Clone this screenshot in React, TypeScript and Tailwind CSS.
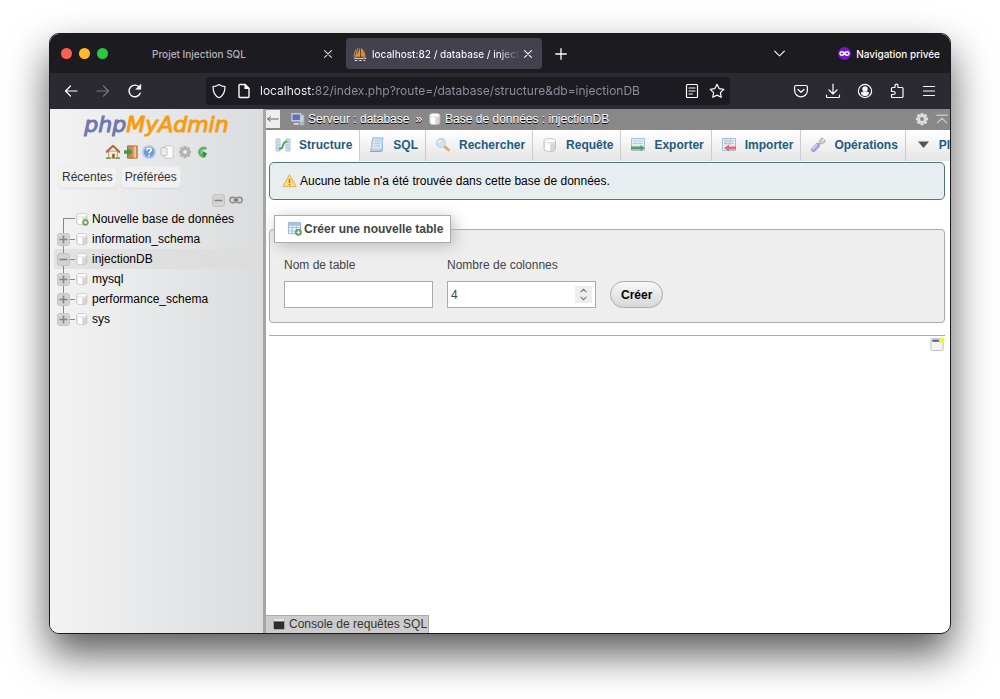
import React from "react";
import type { ReactNode } from "react";

type IconProps = { children: ReactNode; className?: string };

// thin line icons of the browser chrome, 16px grid
function Line({ children, className = "size-4" }: IconProps) {
  return (
    <svg
      viewBox="0 0 16 16"
      className={`${className} shrink-0`}
      fill="none"
      stroke="currentColor"
      strokeWidth="1.2"
      strokeLinecap="round"
      strokeLinejoin="round"
      aria-hidden="true"
    >
      {children}
    </svg>
  );
}

// coloured pixel icons of the phpMyAdmin theme
function Pic({ children, className = "size-4" }: IconProps) {
  return (
    <svg viewBox="0 0 16 16" className={`${className} shrink-0`} fill="none" aria-hidden="true">
      {children}
    </svg>
  );
}

function DbIcon({ className, add }: { className?: string; add?: boolean }) {
  return (
    <Pic className={className}>
      <path d="M2 3.500C2 1 13.500 1 13.500 3.500v9c0 2.500-11.500 2.500-11.500 0z" fill="#e2e2e2" stroke="#c2c2c2" />
      <path d="M3 5.500c2 1 4 1.200 5 1.200V14c-2 0-4-.3-5-1.200z" fill="#fff" />
      <path d="M10 7v6.500M12 6.500V13" stroke="#cacaca" />
      <ellipse cx="7.750" cy="3.600" rx="5.300" ry="1.500" fill="#fafafa" />
      {add && (
        <>
          <circle cx="12" cy="12" r="3.600" fill="#6f9f5b" />
          <circle cx="12" cy="12" r="1.600" fill="#f1f7ee" />
        </>
      )}
    </Pic>
  );
}

const tabIcons: Record<string, ReactNode> = {
  Structure: (
    <>
      <path d="M1 2h4v12H1zM11 2h4v12h-4z" fill="#d7e6f2" stroke="#a9c2d6" />
      <path d="M2 5h2M2 8h2M2 11h2M12 5h2M12 8h2M12 11h2" stroke="#8fb2cf" />
      <path d="M4 12l3-1 2-5 3-2" stroke="#4ea657" strokeWidth="2" />
    </>
  ),
  SQL: (
    <>
      <path d="M4 1h10c-2 3 .5 8-1 12H1.500C4 10 2 5 4 1z" fill="#d3e3f3" stroke="#94b0cc" />
      <path d="M5.500 4h6M5.500 6.500h6M5.500 9H11" stroke="#b3cae0" />
      <path d="M1 14.500h11l2-1.500" stroke="#86a4c4" />
    </>
  ),
  Rechercher: (
    <>
      <path d="M9 9l4.500 4" stroke="#deaa7c" strokeWidth="3" strokeLinecap="round" />
      <circle cx="6" cy="6" r="4.400" fill="#cfe3f5" stroke="#c3d0dd" strokeWidth="1.200" />
      <path d="M3.500 6c0-2 1.500-2.500 2.500-2.500" stroke="#fff" />
    </>
  ),
  Exporter: (
    <>
      <path d="M1.500 1.500h13v12h-13z" fill="#e4edf5" stroke="#a9bfd2" />
      <path d="M3 4h10M3 6.500h10" stroke="#b3c9dc" />
      <path d="M1 11h10" stroke="#55a05a" strokeWidth="3" />
      <path d="M10.500 8l4.500 3-4.500 3z" fill="#55a05a" />
    </>
  ),
  Importer: (
    <>
      <path d="M1.500 1.500h13v12h-13z" fill="#e4edf5" stroke="#a9bfd2" />
      <path d="M3 4h10M3 6.500h10M5 2v6M9 2v6" stroke="#b3c0e0" />
      <path d="M7 11h8" stroke="#e06a7b" strokeWidth="3" />
      <path d="M8 7.500L3 11l5 3.500z" fill="#e06a7b" />
    </>
  ),
  "Opérations": (
    <>
      <path d="M8.500 7.500l3-3" stroke="#b8b8c0" strokeWidth="2.500" />
      <path d="M10 2.500c1-1.500 2.500-1.500 3.500-1.200l-2 2 1.500 1.500 2-2c.5 2-.5 3.700-2.500 4-2 .2-3.500-2-2.500-4.300z" fill="#d3d3d8" stroke="#a6a6ae" strokeWidth=".8" />
      <path d="M3.500 12.500l4-4" stroke="#9fa3df" strokeWidth="5" strokeLinecap="round" />
      <path d="M3 11.500l3.500-3.500" stroke="#ccd0f7" strokeWidth="1.800" strokeLinecap="round" />
    </>
  ),
};

const tabs = ["Structure", "SQL", "Rechercher", "Requête", "Exporter", "Importer", "Opérations"];

const databases = ["information_schema", "injectionDB", "mysql", "performance_schema", "sys"];

const gearTeeth = [0, 45, 90, 135, 180, 225, 270, 315];

function Gear({ className, fill, hole }: { className: string; fill: string; hole: string }) {
  return (
    <Pic className={className}>
      {gearTeeth.map((a) => (
        <path key={a} d="M6.500 1h3l.5 3H6z" fill={fill} transform={`rotate(${a} 8 8)`} />
      ))}
      <circle cx="8" cy="8" r="5" fill={fill} />
      <circle cx="8" cy="8" r="2.200" fill={hole} />
    </Pic>
  );
}

function IconButton({ label, children, className = "" }: { label: string; children: ReactNode; className?: string }) {
  return (
    <button type="button" aria-label={label} className={`flex shrink-0 items-center justify-center ${className}`}>
      {children}
    </button>
  );
}

function TitleBar() {
  return (
    <div className="flex h-[39px] shrink-0 items-center bg-[#1c1b20] pl-[11px] pr-[10px] font-[Inter,sans-serif] text-[10px] text-[#fbfbfe]">
      <div className="flex gap-[7px]">
        <span className="size-[11px] rounded-full bg-[#fe5f57]" />
        <span className="size-[11px] rounded-full bg-[#febb2e]" />
        <span className="size-[11px] rounded-full bg-[#28c840]" />
      </div>

      <div className="ml-[34px] mr-1 flex h-[31px] w-[200px] items-center justify-between pl-[10px] pr-[9px] font-medium text-[#b5b4bc]">
        <span className="whitespace-nowrap">Projet Injection SQL</span>
        <IconButton label="Fermer l'onglet">
          <Line className="size-[10px]">
            <path d="M2.500 2.500l11 11M13.500 2.500l-11 11" stroke="#dddce2" strokeWidth="1.700" />
          </Line>
        </IconButton>
      </div>
      <div className="flex h-[31px] w-[196px] items-center rounded bg-[#42414d] pl-[7px] pr-[9px] font-medium">
        <Pic className="size-[14px]">
          <path d="M8 0v11H2C5 8 7 5 8 0z" fill="#f29111" />
          <path d="M9 1c3 2 5 6 5.500 10H9z" fill="#e8862a" />
          <path d="M3 3L1 11M5.500 1L3 11" stroke="#d9a05b" />
          <path d="M1 13c2-1.500 3 1 5 0s3 1 5 0 3 0 4 0M2 15.500h3M7 15.500h3M12 15.500h2" stroke="#e6e6ea" strokeWidth="1.200" />
        </Pic>
        <span className="ml-[5px] min-w-0 flex-1 overflow-hidden whitespace-nowrap bg-[linear-gradient(90deg,#fbfbfe_85%,transparent)] bg-clip-text text-transparent">
          localhost:82 / database / injectionDB
        </span>
        <IconButton label="Fermer l'onglet" className="ml-[3px]">
          <Line className="size-[10px]">
            <path d="M2.500 2.500l11 11M13.500 2.500l-11 11" strokeWidth="1.700" />
          </Line>
        </IconButton>
      </div>
      <IconButton label="Nouvel onglet" className="ml-3">
        <Line className="size-[14px]">
          <path d="M8 2v12M2 8h12" strokeWidth="1.500" />
        </Line>
      </IconButton>

      <IconButton label="Lister tous les onglets" className="ml-auto mr-[52px]">
        <Line className="size-[13px]">
          <path d="M2 5l6 6 6-6" strokeWidth="1.400" />
        </Line>
      </IconButton>
      <Pic className="size-[13px]">
        <circle cx="8" cy="8" r="8" fill="#7a14d2" />
        <path d="M8 8C6.500 5.500 2.500 5 2.500 8s4 2.500 5.500 0c1.500-2.500 5.500-3 5.500 0s-4 2.500-5.500 0z" stroke="#fff" strokeWidth="1.800" />
      </Pic>
      <span className="ml-[5px] font-medium">Navigation privée</span>
    </div>
  );
}

function ToolBar() {
  return (
    <div className="flex h-9 shrink-0 items-center bg-[#2b2a33] px-[13px] text-[#fbfbfe]">
      <div className="flex gap-4">
        <IconButton label="Précédent">
          <Line>
            <path d="M14 8H2.500M7.500 3L2.500 8l5 5" />
          </Line>
        </IconButton>
        <IconButton label="Suivant" className="text-[#77767f]">
          <Line>
            <path d="M2 8h11.500M8.500 3l5 5-5 5" />
          </Line>
        </IconButton>
        <IconButton label="Actualiser">
          <Line>
            <path d="M13.200 10.200A5.800 5.800 0 1 1 12.500 4.500" strokeWidth="1.400" />
            <path d="M13.800 1.500v4.800H9z" fill="currentColor" strokeWidth=".6" />
          </Line>
        </IconButton>
      </div>

      <div className="mx-[63px] flex h-7 min-w-0 flex-1 items-center rounded bg-[#1c1b22] pl-[5px] pr-[5px]">
        <Line>
          <path d="M8 1.500c2 1.500 4 2 6 2.200 0 5-1.500 9-6 11-4.500-2-6-6-6-11 2-.2 4-.7 6-2.200z" />
        </Line>
        <Line className="ml-[9px] size-4">
          <path d="M3 2.500c0-.6.400-1 1-1h5l4 4v8c0 .6-.4 1-1 1H4c-.6 0-1-.4-1-1z" strokeWidth="1.400" />
          <path d="M9 1.500v4h4z" fill="currentColor" />
        </Line>
        <input
          type="text"
          aria-label="Adresse"
          readOnly
          value="localhost:82/index.php?route=/database/structure&db=injectionDB"
          className="ml-2 min-w-0 flex-1 bg-[linear-gradient(90deg,#fbfbfe_54px,#9190a0_54px)] bg-clip-text font-[Inter,sans-serif] text-[12px] text-transparent outline-none"
        />
        <IconButton label="Mode lecture">
          <Line>
            <path d="M3.500 1.500h9c.6 0 1 .4 1 1v11c0 .6-.4 1-1 1h-9c-.6 0-1-.4-1-1v-11c0-.6.400-1 1-1zM5 5h6M5 8h6M5 11h3.500" />
          </Line>
        </IconButton>
        <IconButton label="Marque-page" className="ml-[9px]">
          <Line>
            <path d="M8 1.300l2.100 4.300 4.700.7-3.400 3.300.8 4.700L8 12.100l-4.200 2.200.8-4.700L1.200 6.300l4.700-.7z" />
          </Line>
        </IconButton>
      </div>

      <div className="flex gap-4">
        <IconButton label="Pocket">
          <Line>
            <path d="M3 2.500h10c.8 0 1.400.6 1.400 1.400V7.500c0 3.500-2.900 6.300-6.400 6.300S1.600 11 1.600 7.500V3.900c0-.8.600-1.400 1.400-1.400zM5 6.500l3 2.800 3-2.800" />
          </Line>
        </IconButton>
        <IconButton label="Téléchargements">
          <Line>
            <path d="M8 1v9.500M4 7l4 4 4-4M1.500 12v1.500c0 .6.400 1 1 1h11c.6 0 1-.4 1-1V12" />
          </Line>
        </IconButton>
        <IconButton label="Compte">
          <Line>
            <circle cx="8" cy="8" r="6.600" />
            <circle cx="8" cy="6" r="2.100" fill="currentColor" />
            <path d="M4.500 10.500c0-1 1-1.300 2-1.300h3c1 0 2 .3 2 1.300-.8 1.500-2 2-3.500 2s-2.700-.5-3.500-2z" fill="currentColor" />
          </Line>
        </IconButton>
        <IconButton label="Extensions">
          <Line>
            <path d="M6 4.500V3c0-1 .6-1.800 1.500-1.800S9 2 9 3v1.500h4c.6 0 1 .4 1 1v8c0 .6-.4 1-1 1H3.500c-.6 0-1-.4-1-1v-2H4.500c1 0 1.700-.7 1.700-1.500S5.500 8.500 4.500 8.500h-2v-3c0-.6.400-1 1-1z" />
          </Line>
        </IconButton>
        <IconButton label="Menu">
          <Line>
            <path d="M2.500 3.500h11M2.500 8h11M2.500 12.500h11" />
          </Line>
        </IconButton>
      </div>
    </div>
  );
}

function Toggle({ open }: { open?: boolean }) {
  return (
    <Pic className="size-[13px]">
      <rect x=".6" y=".6" width="14.800" height="14.800" rx="3" fill="#d3d3d3" stroke="#bdbdbd" />
      <path d={open ? "M3 8h10" : "M3 8h10M8 3v10"} stroke="#858585" strokeWidth="2" />
    </Pic>
  );
}

function Sidebar() {
  return (
    <aside className="w-[216px] shrink-0 border-r-[3px] border-[#a2a6a8] bg-linear-to-r from-[#f3f3f3] to-[#dadcde]">
      <a href="#" className="mt-[2px] block text-center font-['DejaVu_Sans',sans-serif] text-[22px] leading-7 italic">
        <span className="text-[#6c78af] [-webkit-text-stroke:1px_#6c78af]">php</span>
        <span className="text-[#f89c0e] [-webkit-text-stroke:1px_#f89c0e]">MyAdmin</span>
      </a>

      <div className="mt-[6px] flex justify-center gap-1 pl-[2px]">
        <a href="#" aria-label="Accueil">
          <Pic className="size-[14px]">
            <path d="M3 7h10v8H3z" fill="#f3ead8" stroke="#a3907a" />
            <path d="M0 8.500L8 1l8 7.500" stroke="#b5622d" strokeWidth="2.200" />
            <path d="M7 10h3v5H7z" fill="#97623a" />
            <path d="M0 15h5M11 15h5" stroke="#6fa653" strokeWidth="2" />
          </Pic>
        </a>
        <a href="#" aria-label="Déconnexion">
          <Pic className="size-[14px]">
            <path d="M4 1h11v14H4z" fill="#d58c4e" stroke="#9b6337" />
            <path d="M11 2l3-1v14l-3-1z" fill="#f1c58f" />
            <path d="M0 6h5V3l5 5-5 5v-3H0z" fill="#459b4a" />
          </Pic>
        </a>
        <a href="#" aria-label="Documentation de phpMyAdmin">
          <Pic className="size-[14px]">
            <circle cx="8" cy="8" r="7" fill="#6d9edb" stroke="#b9cbe4" strokeWidth="2" />
            <path d="M5.500 6c0-3 5-3 5-.3C10.500 7.500 8 7.500 8 9.500M8 11v2" stroke="#fff" strokeWidth="1.800" />
          </Pic>
        </a>
        <a href="#" aria-label="Documentation de MySQL">
          <Pic className="size-[14px]">
            <path d="M5 1h8l2 2v12H5z" fill="#fcfcfc" stroke="#c3c3c3" />
            <path d="M1 4c0-1.500 7-1.500 7 0v7c0 1.500-7 1.500-7 0z" fill="#ececec" stroke="#bcbcbc" />
          </Pic>
        </a>
        <a href="#" aria-label="Paramètres du panneau">
          <Gear className="size-[14px]" fill="#b2b2b2" hole="#ededed" />
        </a>
        <a href="#" aria-label="Recharger">
          <Pic className="size-[14px]">
            <path d="M11.500 4.500A4.500 4.500 0 1 0 11 12" stroke="#5fb266" strokeWidth="3.500" />
            <path d="M7 6.500l6 3.500-5 4z" fill="#348a3d" />
          </Pic>
        </a>
      </div>

      <div className="mt-[7px] flex gap-1 pl-2">
        <button type="button" className="h-[22px] rounded-sm border border-[#ebebeb] bg-[#f1f1f1] px-[3px] text-[#333] shadow-xs">
          Récentes
        </button>
        <button type="button" className="h-[22px] rounded-sm border border-[#ebebeb] bg-[#f1f1f1] px-[3px] text-[#333] shadow-xs">
          Préférées
        </button>
      </div>

      <div className="mt-1 flex h-4 items-center justify-end gap-1 pr-[20px]">
        <IconButton label="Tout réduire">
          <Toggle open />
        </IconButton>
        <IconButton label="Délier du panneau principal">
          <Pic className="size-[14px]">
            <rect x="1" y="5" width="7" height="6" rx="3" stroke="#909090" strokeWidth="1.800" />
            <rect x="8" y="5" width="7" height="6" rx="3" stroke="#909090" strokeWidth="1.800" />
            <path d="M5 8h6" stroke="#777" strokeWidth="1.500" />
          </Pic>
        </IconButton>
      </div>

      <ul className="mt-px pl-1 text-black">
        <li className="flex h-5 items-center pl-[9px]">
          <span className="mt-[9px] h-[11px] w-3 border-l border-t border-[#888]" />
          <DbIcon className="size-[14px]" add />
          <a href="#" className="ml-[3px] whitespace-nowrap">
            Nouvelle base de données
          </a>
        </li>
        {databases.map((name) => {
          const current = name === "injectionDB";
          return (
            <li key={name} className={`flex h-5 items-center pl-[3px] ${current ? "bg-[#dcdcdc]/70" : ""}`}>
              <span className="flex h-5 w-[13px] flex-col items-center">
                <span className="w-px flex-1 bg-[#888]" />
                <IconButton label={current ? "Réduire" : "Développer"}>
                  <Toggle open={current} />
                </IconButton>
                <span className={`w-px flex-1 ${name === "sys" ? "" : "bg-[#888]"}`} />
              </span>
              <span className="h-px w-[5px] bg-[#888]" />
              <DbIcon className="size-[14px]" />
              <a href="#" className="ml-[3px]">
                {name}
              </a>
            </li>
          );
        })}
      </ul>
    </aside>
  );
}

function Breadcrumb() {
  return (
    <nav className="flex h-[21px] shrink-0 items-center bg-[#888] pr-[2px] pb-px text-white [text-shadow:0_1px_0_#000]">
      <IconButton label="Masquer le panneau" className="h-[18px] w-[14px] bg-[#eee]">
        <Line className="size-3 text-[#555]">
          <path d="M15 8H1M4.500 5L1 8l3.500 3" />
        </Line>
      </IconButton>
      <a href="#" className="ml-[11px] flex items-center gap-[3px]">
        <Pic className="size-[14px]">
          <path d="M11 3h4v12h-5z" fill="#c9d5dd" stroke="#8796a1" />
          <path d="M1 2h10v8H1z" fill="#5b72c6" stroke="#c3cbdd" strokeWidth="1.500" />
          <path d="M12 12h2" stroke="#69c26c" strokeWidth="2" />
          <path d="M3 13.500h6" stroke="#d6d9e0" strokeWidth="2" />
        </Pic>
        Serveur : database
      </a>
      <span className="mx-[6px]">»</span>
      <a href="#" className="flex items-center gap-[3px]">
        <DbIcon className="size-[14px]" />
        Base de données : injectionDB
      </a>
      <IconButton label="Paramètres de la page" className="ml-auto">
        <Gear className="size-[14px]" fill="#dcdcdc" hole="#888" />
      </IconButton>
      <IconButton label="Remonter" className="ml-[7px]">
        <Line className="size-3 text-[#c4c4c4]">
          <path d="M1 3h14M2 13l6-6 6 6" strokeWidth="1.800" />
        </Line>
      </IconButton>
    </nav>
  );
}

function Tabs() {
  return (
    <ul className="flex h-[31px] shrink-0 overflow-hidden font-bold text-[#235a81]">
      {tabs.map((name) => (
        <li
          key={name}
          className={
            name === "Structure"
              ? "shrink-0 border-r border-[#ccc] bg-white"
              : "shrink-0 border-r border-[#ccc] bg-linear-to-b from-white to-[#e5e5e5]"
          }
        >
          <a href="#" className="flex h-[29px] items-center gap-2 pl-[9px] pr-[7px]">
            {name === "Requête" ? <DbIcon /> : <Pic>{tabIcons[name]}</Pic>}
            {name}
          </a>
        </li>
      ))}
      <li className="shrink-0 bg-linear-to-b from-white to-[#e5e5e5]">
        <a href="#" className="flex h-[29px] items-center gap-2 pl-[9px] pr-[7px]">
          <Pic>
            <path d="M3 4.500h11L8.500 11z" fill="#555" />
          </Pic>
          Plus
        </a>
      </li>
    </ul>
  );
}

function CreateTable() {
  return (
    <form>
      <fieldset className="mt-[15px] rounded border border-[#aaa] bg-[#eee] px-[14px] pb-[14px] text-[#444]">
        <legend className="-ml-[10px] flex h-7 items-center gap-[2px] border border-[#aaa] bg-white pb-px pl-3 pr-[7px] font-bold shadow-[3px_3px_15px_#bbb]">
          <Pic className="size-[15px]">
            <path d="M1.500 1.500h13v12h-13z" fill="#eaf2fa" stroke="#8fb1d3" />
            <path d="M2 3.500h12" stroke="#a5c4e4" strokeWidth="3" />
            <path d="M2 7h12M2 10.500h12M5.500 4v9M10 4v9" stroke="#a5c0da" />
            <circle cx="12.200" cy="12" r="3.600" fill="#5f9a4c" />
            <path d="M10.200 12h4M12.200 10v4" stroke="#fff" strokeWidth="1.300" />
          </Pic>
          Créer une nouvelle table
        </legend>
        <div className="mt-[14px] flex flex-wrap items-end gap-[14px]">
          <label className="block w-[149px]">
            Nom de table
            <input type="text" className="mt-2 block h-[27px] w-full border border-[#aaa] bg-white px-1 outline-none" />
          </label>
          <label className="relative block w-[149px]">
            Nombre de colonnes
            <input
              type="number"
              defaultValue={4}
              className="mt-2 block h-[27px] w-full border border-[#aaa] bg-white px-[3px] outline-none [appearance:textfield] [&::-webkit-inner-spin-button]:appearance-none"
            />
            <Line className="absolute right-1 bottom-[5px] size-[17px] bg-[#eee] text-[#888]">
              <path d="M5.500 5.500L8 3l2.500 2.500M5.500 10.500L8 13l2.500-2.500" />
            </Line>
          </label>
          <button
            type="submit"
            className="h-[27px] rounded-full border border-[#aaa] bg-linear-to-b from-[#f8f8f8] to-[#d8d8d8] px-[10px] font-bold text-black"
          >
            Créer
          </button>
        </div>
      </fieldset>
    </form>
  );
}

export default function App() {
  return (
    <div className="flex h-screen bg-white px-[49px] pt-[33px] pb-[65px]">
      <div className="flex min-w-0 flex-1 flex-col overflow-hidden rounded-[10px] border border-[#1b1b1d] bg-white font-['Liberation_Sans',Arial,sans-serif] text-[12px] leading-4 shadow-[0_20px_40px_rgba(0,0,0,0.65)]">
        <TitleBar />
        <ToolBar />
        <div className="flex min-h-0 flex-1">
          <Sidebar />
          <main className="flex min-w-0 flex-1 flex-col">
            <Breadcrumb />
            <Tabs />
            <div className="flex-1 pl-[3px] pr-[5px]">
              <div
                role="alert"
                className="mt-px flex h-[38px] items-center gap-[3px] rounded-[5px] border border-[#4d7880] bg-[#e8edf0] pb-px pl-3 text-black"
              >
                <Pic className="size-[15px]">
                  <path d="M8 1.500L15.200 14.500H.8z" fill="#fbdc7c" stroke="#dfb254" strokeLinejoin="round" />
                  <path d="M8 6v4.500M8 11.500V13" stroke="#a07c25" strokeWidth="1.500" />
                </Pic>
                Aucune table n'a été trouvée dans cette base de données.
              </div>
              <CreateTable />
              <hr className="mt-3 border-[#aaa]" />
              <div className="mt-px flex justify-end">
                <IconButton label="Ouvrir une nouvelle fenêtre">
                  <Pic className="size-[15px]">
                    <rect x="1" y="1.500" width="13" height="13" rx="1.500" fill="#f3f3f1" stroke="#bbb" />
                    <path d="M2.500 4h8" stroke="#55557f" strokeWidth="2.200" />
                    <circle cx="12.500" cy="3.500" r="3" fill="#eaf04a" />
                  </Pic>
                </IconButton>
              </div>
            </div>
            <div className="flex">
              <button
                type="button"
                className="flex h-[18px] items-center gap-1 border-t border-r border-[#aaa] bg-[#ccc] pl-[7px] pr-px pb-px text-[#333]"
              >
                <Pic className="size-3">
                  <path d="M1 2h14v13H1z" fill="#2d2d2d" />
                  <path d="M1 3h14" stroke="#eee" strokeWidth="3" />
                </Pic>
                Console de requêtes SQL
              </button>
            </div>
          </main>
        </div>
      </div>
    </div>
  );
}
